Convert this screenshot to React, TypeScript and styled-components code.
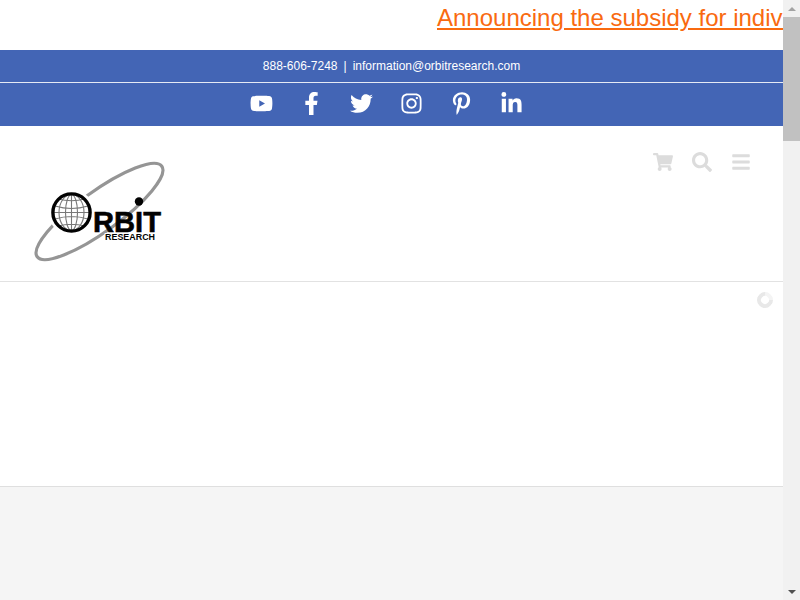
import * as React from "react";
import styled, { createGlobalStyle } from "styled-components";
import {
  FaBars,
  FaFacebookF,
  FaInstagram,
  FaLinkedinIn,
  FaPinterestP,
  FaSearch,
  FaShoppingCart,
  FaTwitter,
  FaYoutube,
} from "react-icons/fa";

const socials = [
  { name: "YouTube", icon: <FaYoutube /> },
  { name: "Facebook", icon: <FaFacebookF /> },
  { name: "Twitter", icon: <FaTwitter /> },
  { name: "Instagram", icon: <FaInstagram /> },
  { name: "Pinterest", icon: <FaPinterestP /> },
  { name: "LinkedIn", icon: <FaLinkedinIn /> },
];

const Logo = () => (
  <LogoMark width="140" height="110" viewBox="30 156 140 110">
    <ellipse
      cx="99.5"
      cy="211.5"
      rx="77"
      ry="20"
      fill="none"
      stroke="#949494"
      strokeWidth="3.2"
      transform="rotate(-36 99.5 211.5)"
    />
    <circle cx="71.5" cy="212.5" r="23" fill="#fff" />
    <g fill="none" stroke="#777" strokeWidth="1.1">
      <ellipse cx="71.5" cy="212.5" rx="6" ry="18" />
      <ellipse cx="71.5" cy="212.5" rx="12.5" ry="18" />
      <path d="M71.5 194v37M53 212.5h37M55 206c10 3 23 3 33 0M55 219c10-3 23-3 33 0M58 199c8 2 19 2 27 0M58 226c8-2 19-2 27 0" />
    </g>
    <circle cx="71.5" cy="212.5" r="18.6" fill="none" stroke="#000" strokeWidth="3.4" />
    <LogoWord x="93" y="232" textLength="68" lengthAdjust="spacingAndGlyphs">
      RBIT
    </LogoWord>
    <LogoSub x="105" y="239.5" textLength="50" lengthAdjust="spacingAndGlyphs">
      RESEARCH
    </LogoSub>
    <circle cx="139" cy="201.5" r="4.2" fill="#000" />
  </LogoMark>
);

export default function App() {
  return (
    <Screen>
      <GlobalStyle />
      <Page>
        <Ticker>
          <a href="#subsidy">Announcing the subsidy for individuals who are blind</a>
        </Ticker>
        <TopBar>
          <Contact>
            888-606-7248<Pipe>|</Pipe>information@orbitresearch.com
          </Contact>
          <Socials>
            {socials.map(s => (
              <Social key={s.name} href="#social" aria-label={s.name}>
                {s.icon}
              </Social>
            ))}
          </Socials>
        </TopBar>
        <Header>
          <Logo />
          <Tools>
            <Tool>
              <FaShoppingCart />
            </Tool>
            <Tool>
              <FaSearch />
            </Tool>
            <Tool>
              <FaBars />
            </Tool>
          </Tools>
        </Header>
        <Content>
          <Spinner />
        </Content>
        <Footer />
      </Page>
      <ScrollBar aria-hidden="true">
        <Arrow dir="up" />
        <Track>
          <Thumb />
        </Track>
        <Arrow dir="down" />
      </ScrollBar>
    </Screen>
  );
}

const GlobalStyle = createGlobalStyle`
  html, body {
    margin: 0;
    height: 100%;
    overflow: hidden;
    background: #fff;
    font-family: "Liberation Sans", Arial, sans-serif;
  }
  #root {
    height: 100%;
  }
`;

const Screen = styled.div`
  display: flex;
  height: 600px;
`;
const Page = styled.div`
  flex: 1;
  min-width: 0;
  display: flex;
  flex-direction: column;
`;
const Ticker = styled.div`
  height: 50px;
  flex-shrink: 0;
  padding-left: 437px;
  overflow: hidden;
  white-space: nowrap;
  font-size: 24px;
  line-height: 35px;
  a {
    color: #f96a10;
  }
`;
const TopBar = styled.div`
  flex-shrink: 0;
  background: #4365b5;
  color: #fff;
`;
const Contact = styled.div`
  height: 32px;
  border-bottom: 1px solid #e6eaf5;
  font-size: 12px;
  line-height: 32px;
  text-align: center;
`;
const Pipe = styled.span`
  margin: 0 6px;
`;
const Socials = styled.div`
  height: 43px;
  box-sizing: border-box;
  padding: 0 11px 2px 0;
  display: flex;
  justify-content: center;
  align-items: center;
`;
const Social = styled.a`
  width: 50px;
  display: flex;
  justify-content: center;
  color: #fff;
  font-size: 23px;
`;
const Header = styled.div`
  height: 156px;
  flex-shrink: 0;
  box-sizing: border-box;
  display: flex;
  justify-content: space-between;
  align-items: flex-start;
  padding: 26px 32px 0 30px;
  border-bottom: 1px solid #e2e2e2;
`;
const LogoMark = styled.svg`
  margin-top: 4px;
  opacity: 0.99;
`;
const LogoWord = styled.text`
  font-family: "Liberation Sans", Arial, sans-serif;
  font-weight: bold;
  font-size: 30px;
  fill: #000;
  stroke: #000;
  stroke-width: 0.6px;
`;
const LogoSub = styled.text`
  font-family: "Liberation Sans", Arial, sans-serif;
  font-weight: bold;
  font-size: 9.5px;
  fill: #000;
  stroke: #fff;
  stroke-width: 2px;
  paint-order: stroke;
`;
const Tools = styled.div`
  display: flex;
  gap: 19px;
  color: #dcdcdc;
  font-size: 20px;
`;
const Tool = styled.span`
  display: flex;
  width: 20px;
  justify-content: center;
`;
const Content = styled.div`
  height: 205px;
  flex-shrink: 0;
  box-sizing: border-box;
  display: flex;
  justify-content: flex-end;
  align-items: flex-start;
  padding: 10px 10px 0 0;
  border-bottom: 1px solid #dfdfdf;
`;
const Spinner = styled.div`
  width: 16px;
  height: 16px;
  box-sizing: border-box;
  border-radius: 50%;
  border: 4px solid #e8e8e8;
  border-top-color: #f4f4f4;
  transform: rotate(45deg);
`;
const Footer = styled.div`
  flex: 1;
  background: #f5f5f5;
`;
const ScrollBar = styled.div`
  width: 17px;
  flex-shrink: 0;
  display: flex;
  flex-direction: column;
  background: #f1f1f1;
`;
const Arrow = styled.div<{ dir: "up" | "down" }>`
  height: 17px;
  flex-shrink: 0;
  display: flex;
  justify-content: center;
  align-items: center;
  &::before {
    content: "";
    border-left: 4px solid transparent;
    border-right: 4px solid transparent;
    ${props =>
      props.dir === "up"
        ? "border-bottom: 4px solid #a3a3a3;"
        : "border-top: 4px solid #505050;"}
  }
`;
const Track = styled.div`
  flex: 1;
`;
const Thumb = styled.div`
  height: 124px;
  background: #c1c1c1;
`;
